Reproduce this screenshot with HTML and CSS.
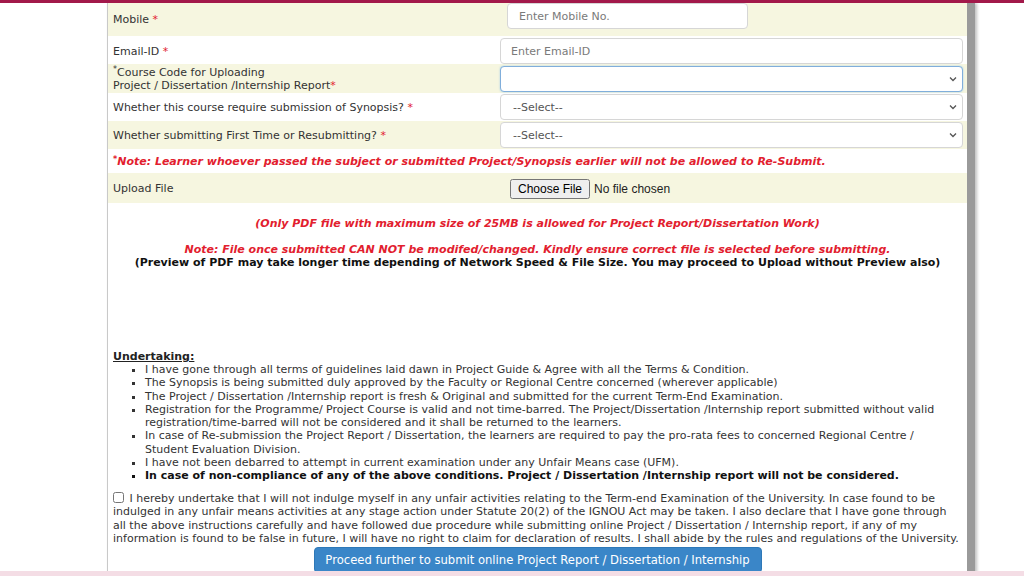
FILE: index.html
```html
<!DOCTYPE html>
<html lang="en">
<head>
<meta charset="utf-8">
<title>Project Submission</title>
<link rel="stylesheet" href="styles.css">
</head>
<body>
<div class="topbar"></div>
<main class="viewport">
  <div class="panel">
    <div class="row alt row-mobile">
      <label class="lbl">Mobile <span class="req">*</span></label>
      <div class="field field-top"><input class="ctl ctl-mobile" type="text" placeholder="Enter Mobile No."></div>
    </div>
    <div class="row row-email">
      <label class="lbl">Email-ID <span class="req">*</span></label>
      <div class="field"><input class="ctl" type="text" placeholder="Enter Email-ID"></div>
    </div>
    <div class="row alt">
      <label class="lbl lbl-two"><sup class="mark">*</sup>Course Code for Uploading<br>Project / Dissertation /Internship Report<span class="req">*</span></label>
      <div class="field sel-wrap">
        <select class="ctl sel focus"><option></option></select>
        <svg class="chev" width="8" height="6" viewBox="0 0 8 6"><path d="M1 1.5 L4 4.5 L7 1.5" fill="none" stroke="#555" stroke-width="1.3"/></svg>
      </div>
    </div>
    <div class="row">
      <label class="lbl">Whether this course require submission of Synopsis? <span class="req">*</span></label>
      <div class="field sel-wrap">
        <select class="ctl sel"><option>--Select--</option></select>
        <svg class="chev" width="8" height="6" viewBox="0 0 8 6"><path d="M1 1.5 L4 4.5 L7 1.5" fill="none" stroke="#555" stroke-width="1.3"/></svg>
      </div>
    </div>
    <div class="row alt">
      <label class="lbl">Whether submitting First Time or Resubmitting? <span class="req">*</span></label>
      <div class="field sel-wrap">
        <select class="ctl sel"><option>--Select--</option></select>
        <svg class="chev" width="8" height="6" viewBox="0 0 8 6"><path d="M1 1.5 L4 4.5 L7 1.5" fill="none" stroke="#555" stroke-width="1.3"/></svg>
      </div>
    </div>
    <div class="note-row">
      <p class="note"><sup>*</sup>Note: Learner whoever passed the subject or submitted Project/Synopsis earlier will not be allowed to Re-Submit.</p>
    </div>
    <div class="row alt row-upload">
      <label class="lbl">Upload File</label>
      <div class="field"><input class="file" type="file"></div>
    </div>

    <div class="info">
      <p class="warn">(Only PDF file with maximum size of 25MB is allowed for Project Report/Dissertation Work)</p>
      <p class="warn warn-2">Note: File once submitted CAN NOT be modifed/changed. Kindly ensure correct file is selected before submitting.</p>
      <p class="preview-note">(Preview of PDF may take longer time depending of Network Speed &amp; File Size. You may proceed to Upload without Preview also)</p>
    </div>

    <div class="preview"></div>

    <section class="undertaking">
      <h4 class="ut-title">Undertaking:</h4>
      <ul class="ut-list">
        <li>I have gone through all terms of guidelines laid dawn in Project Guide &amp; Agree with all the Terms &amp; Condition.</li>
        <li>The Synopsis is being submitted duly approved by the Faculty or Regional Centre concerned (wherever applicable)</li>
        <li>The Project / Dissertation /Internship report is fresh &amp; Original and submitted for the current Term-End Examination.</li>
        <li>Registration for the Programme/ Project Course is valid and not time-barred. The Project/Dissertation /Internship report submitted without valid registration/time-barred will not be considered and it shall be returned to the learners.</li>
        <li>In case of Re-submission the Project Report / Dissertation, the learners are required to pay the pro-rata fees to concerned Regional Centre / Student Evaluation Division.</li>
        <li>I have not been debarred to attempt in current examination under any Unfair Means case (UFM).</li>
        <li class="strong">In case of non-compliance of any of the above conditions. Project / Dissertation /Internship report will not be considered.</li>
      </ul>
      <p class="declare"><input class="chk" type="checkbox"> I hereby undertake that I will not indulge myself in any unfair activities relating to the Term-end Examination of the University. In case found to be indulged in any unfair means activities at any stage action under Statute 20(2) of the IGNOU Act may be taken. I also declare that I have gone through all the above instructions carefully and have followed due procedure while submitting online Project / Dissertation / Internship report, if any of my information is found to be false in future, I will have no right to claim for declaration of results. I shall abide by the rules and regulations of the University.</p>
      <div class="actions">
        <button class="btn" type="button">Proceed further to submit online Project Report / Dissertation / Internship</button>
      </div>
    </section>
  </div>
</main>
<div class="bottombar"></div>
</body>
</html>
```
FILE: styles.css
```css
* { box-sizing: border-box; }
html, body { margin: 0; padding: 0; }
body {
  height: 576px;
  overflow: hidden;
  display: flex;
  flex-direction: column;
  background: #fff;
  font-family: "DejaVu Sans", Verdana, sans-serif;
  font-size: 11px;
  color: #333;
}
.topbar { height: 3px; background: #a2194a; flex: none; }
.bottombar { height: 5px; background: #f4dde5; flex: none; }
.viewport { flex: 1; overflow: hidden; }

.panel {
  width: 868px;
  margin-left: 107px;
  background: #fff;
  border-left: 1px solid #c9c9c9;
  border-right: 8px solid #9a9a9a;
  box-shadow: 2px 0 3px rgba(0,0,0,0.25);
  min-height: 100%;
}

.row {
  display: grid;
  grid-template-columns: 387px 1fr;
  align-items: center;
  padding: 1px 4px 1px 5px;
  min-height: 28px;
}
.row.alt { background: #f6f6e0; }
.row-mobile { height: 33px; padding-top: 0; padding-bottom: 0; }
.row-email { padding-top: 2px; padding-bottom: 0; }
.field-top { align-self: start; }
.row-upload { min-height: 30px; padding-top: 2px; }

.lbl { color: #333; line-height: 13px; }
.lbl-two { padding-top: 1px; }
.req { color: #e2202e; }
.mark { font-size: 8px; vertical-align: 4px; line-height: 0; }

.field { position: relative; }
.ctl {
  display: block;
  width: 100%;
  height: 26px;
  border: 1px solid #d6d6d6;
  border-radius: 4px;
  background: #fff;
  font-family: "DejaVu Sans", Verdana, sans-serif;
  font-size: 11px;
  color: #555;
  padding: 0 10px;
}
.ctl::placeholder { color: #7a7a7a; }
.ctl-mobile { width: 241px; margin-left: 7px; padding-left: 11px; }
.sel { appearance: none; -webkit-appearance: none; padding-left: 12px; }
.sel.focus { border-color: #80aedb; box-shadow: 0 0 2px rgba(102,175,233,0.6); }
.chev { position: absolute; right: 6px; top: 10px; }

.note-row { padding: 0 5px; height: 24px; display: flex; align-items: center; }
.note {
  margin: 0;
  color: #e2202e;
  font-weight: bold;
  font-style: italic;
  font-size: 11px;
}
.note sup { font-size: 8px; vertical-align: 3px; line-height: 0; }

.file {
  margin-left: 10px;
  font-family: "Liberation Sans", Arial, sans-serif;
  font-size: 12px;
  color: #222;
}

.info { text-align: center; padding-top: 14px; }
.info p { margin: 0; line-height: 13px; }
.warn { color: #e2202e; font-weight: bold; font-style: italic; }
.warn-2 { margin-top: 13px !important; }
.preview-note { color: #111; font-weight: bold; }

.preview { height: 81px; }

.undertaking { padding: 0 5px; }
.ut-title {
  margin: 0;
  font-size: 11px;
  line-height: 13px;
  text-decoration: underline;
  color: #222;
}
.ut-list {
  margin: 0;
  padding-left: 32px;
  padding-right: 22px;
  list-style: square;
  line-height: 13.3px;
  color: #333;
}
.ut-list .strong { font-weight: bold; color: #111; }
.declare {
  margin: 9px 0 0;
  line-height: 13.5px;
  color: #333;
  padding-right: 3px;
}
.chk { width: 11px; height: 11px; margin: 0 2px 0 0; vertical-align: -1px; }
.actions { display: flex; justify-content: center; margin-top: 1px; }
.btn {
  background: #3a86c8;
  color: #fff;
  border: 1px solid #2e78b7;
  border-radius: 4px;
  height: 26px;
  padding: 0 10px;
  font-family: "DejaVu Sans", Verdana, sans-serif;
  font-size: 11.6px;
  width: 448px;
}
```
